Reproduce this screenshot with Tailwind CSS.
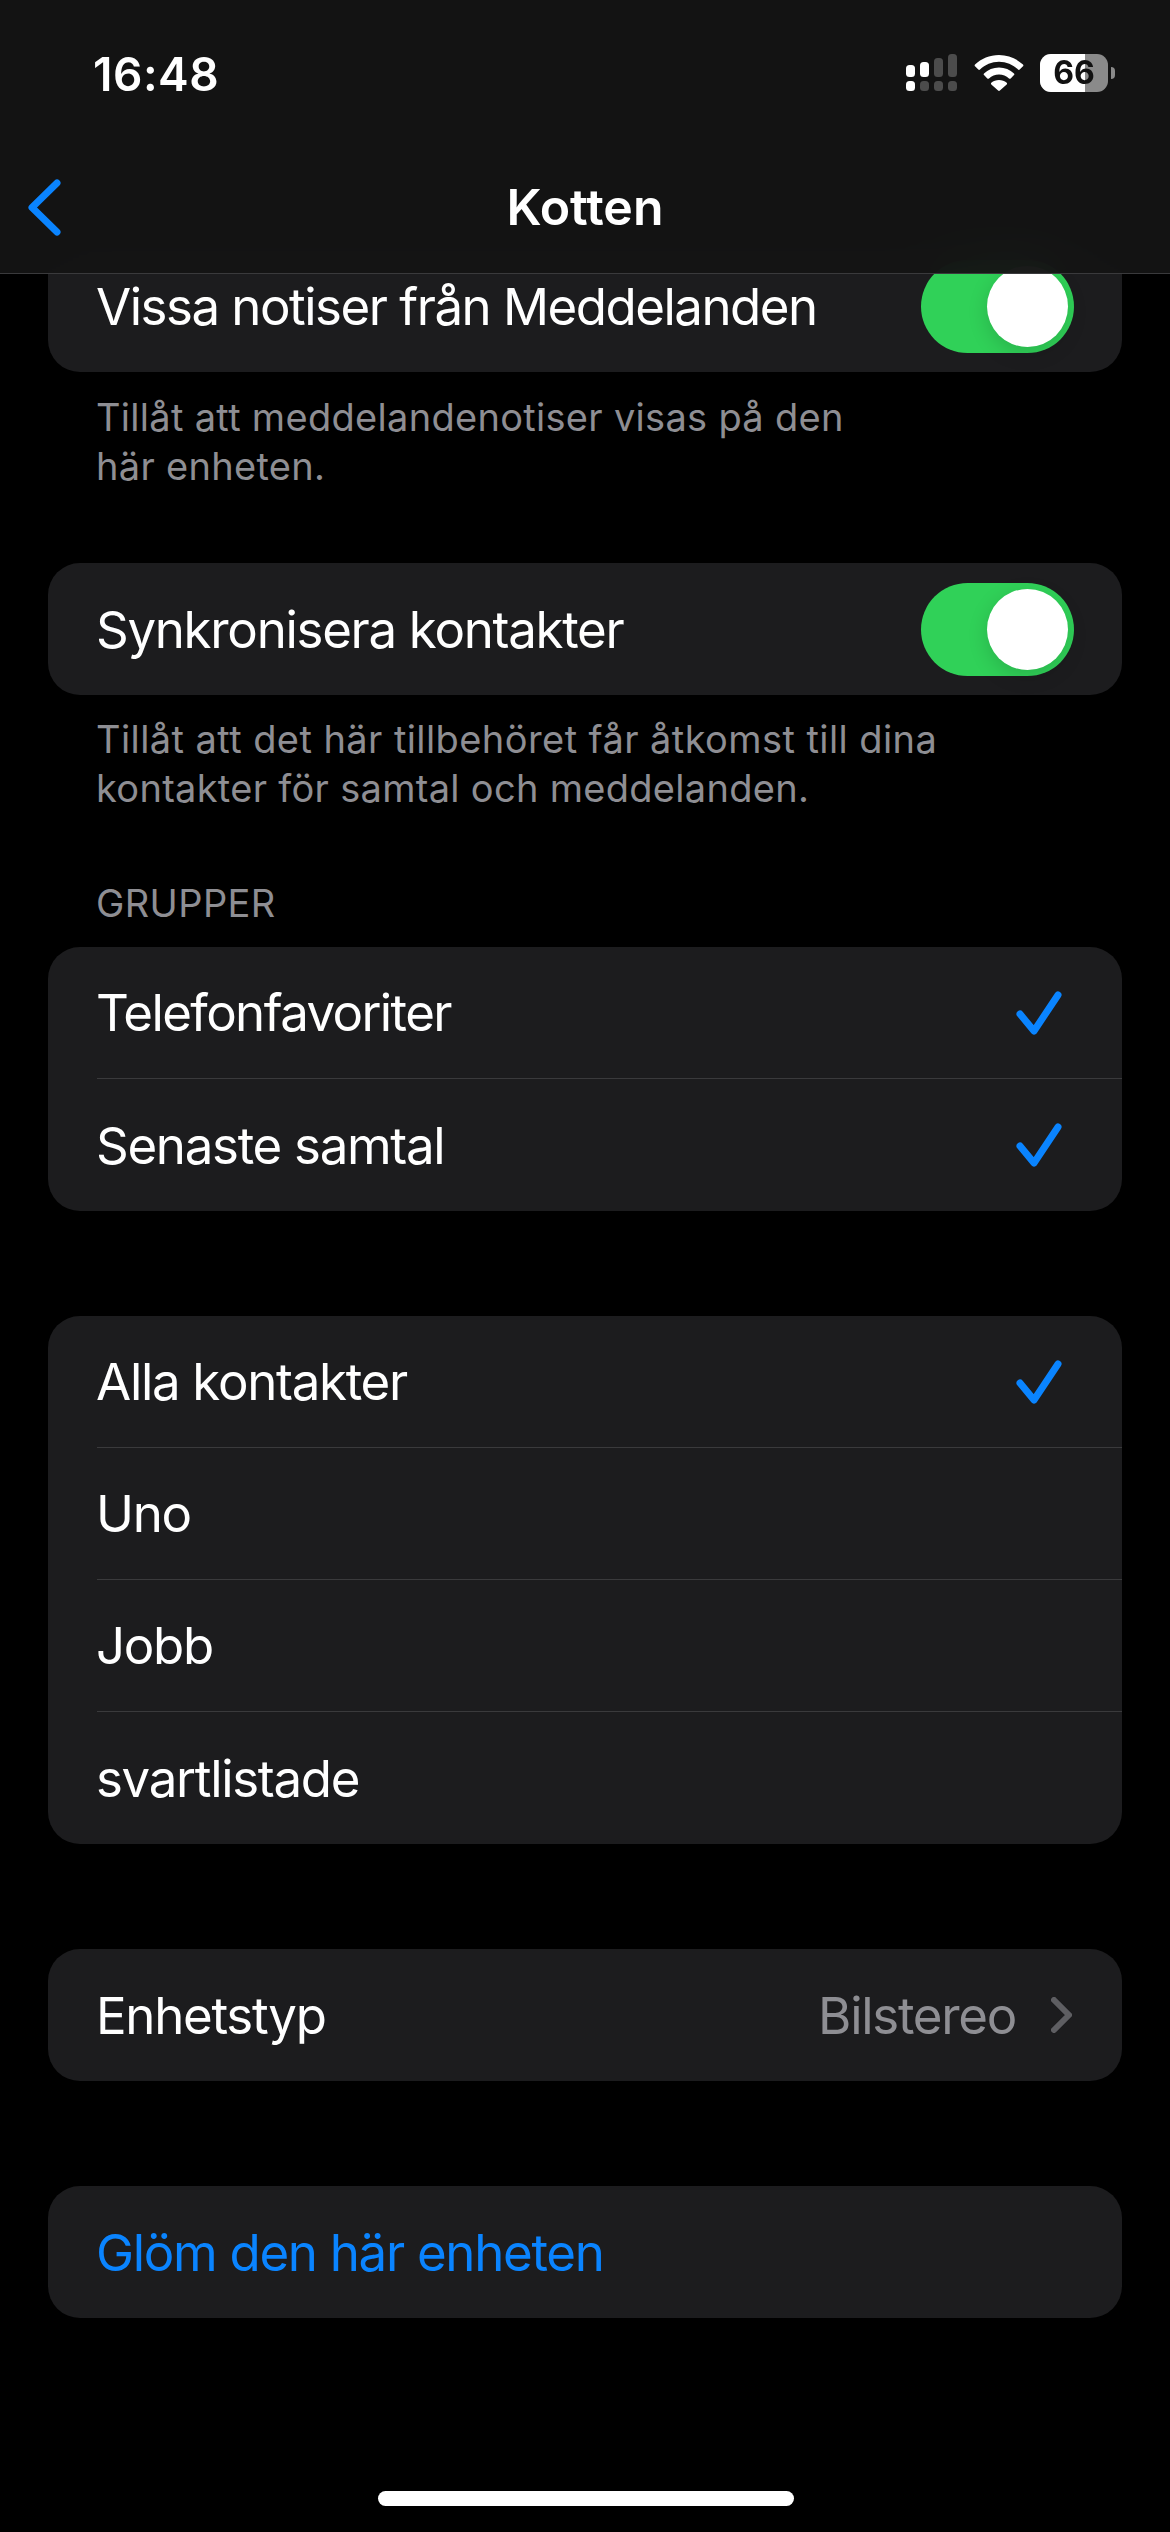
<!DOCTYPE html>
<html lang="sv">
<head>
  <meta charset="UTF-8" />
  <meta name="viewport" content="width=device-width, initial-scale=1" />
  <title>Kotten</title>
  <script src="https://cdn.jsdelivr.net/npm/@tailwindcss/browser@4"></script>
</head>
<body class="bg-black w-[1170px] h-[2532px] overflow-hidden relative font-['Inter','Liberation_Sans',sans-serif] text-white">

  <!-- Status bar + nav -->
  <header class="relative z-10 h-[274px] bg-[#141414]/95 backdrop-blur-xl border-b border-[#3a3a3c]">
    <div class="flex items-center justify-between h-[146px] pl-[93px] pr-[55px]">
      <span class="text-[46px] font-semibold leading-none tracking-[0.5px] mt-[1px]">16:48</span>
      <div class="flex items-center">
        <svg width="52" height="38" viewBox="0 0 52 38" class="mr-[16px]">
          <rect x="0" y="11" width="9" height="12" rx="3.5" fill="#fff"/>
          <rect x="14" y="8" width="9" height="15" rx="3.5" fill="#fff"/>
          <rect x="28" y="4" width="9" height="19" rx="3.5" fill="#4c4c4c"/>
          <rect x="42" y="0" width="9" height="23" rx="3.5" fill="#4c4c4c"/>
          <rect x="0" y="27" width="9" height="10" rx="3.5" fill="#fff"/>
          <rect x="14" y="27" width="9" height="10" rx="3.5" fill="#4c4c4c"/>
          <rect x="28" y="27" width="9" height="10" rx="3.5" fill="#4c4c4c"/>
          <rect x="42" y="27" width="9" height="10" rx="3.5" fill="#4c4c4c"/>
        </svg>
        <svg width="50" height="36" viewBox="0 0 50 36" class="mr-[16px]" fill="#fff">
          <path d="M25 0C15.6 0 7.3 3.6 1 9.6c-.5.5-.5 1.2 0 1.7l3.3 3.3c.5.5 1.2.5 1.7 0C11.1 9.8 17.7 6.8 25 6.8s13.9 3 19 7.8c.5.5 1.200.5 1.700 0l3.300-3.300c.5-.5.5-1.200 0-1.700C42.700 3.600 34.400 0 25 0z"/>
          <path d="M25 12.500c-5.800 0-11 2.200-15 5.900-.5.500-.5 1.200 0 1.700l3.300 3.300c.5.500 1.200.500 1.700.100 2.700-2.400 6.200-3.900 10-3.900s7.300 1.500 10 3.900c.5.400 1.200.400 1.700-.100l3.300-3.300c.5-.5.5-1.200 0-1.700-4-3.700-9.200-5.900-15-5.900z"/>
          <path d="M25 25c-2.900 0-5.600 1-7.700 2.800-.5.400-.5 1.200 0 1.700l6.800 6.100c.5.500 1.300.500 1.800 0l6.800-6.100c.5-.5.5-1.300 0-1.700C30.600 26 27.900 25 25 25z"/>
        </svg>
        <div class="flex items-center">
          <div class="relative w-[68px] h-[38px] rounded-[11px] overflow-hidden bg-[#8a8a8a] flex items-center justify-center">
            <div class="absolute left-0 top-0 bottom-0 w-[45px] bg-white"></div>
            <span class="relative text-[32px] font-bold leading-none text-[#111]">66</span>
          </div>
          <div class="w-[4px] h-[12px] ml-[3px] bg-[#8a8a8a] rounded-r-full"></div>
        </div>
      </div>
    </div>
    <div class="relative flex items-center justify-center h-[122px]">
      <svg width="40" height="64" viewBox="0 0 40 64" fill="none" class="absolute left-[24px] top-[29px]">
        <path d="M33 8 L8 32.500 L33 57" stroke="#0a84ff" stroke-width="7" stroke-linecap="round" stroke-linejoin="round"/>
      </svg>
      <h1 class="text-[50px] font-semibold leading-none">Kotten</h1>
    </div>
  </header>

  <main class="px-[48px]">
    <!-- Card is scrolled partly under the nav bar -->
    <section class="-mt-[34px] bg-[#1c1c1e] rounded-[32px] h-[132px] flex items-center justify-between pl-[48px] pr-[48px]">
      <span class="text-[51px] leading-none tracking-[-1.5px]">Vissa notiser från Meddelanden</span>
      <div class="relative w-[153px] h-[93px] rounded-full bg-[#30d158]">
        <div class="absolute right-[6px] top-[6px] w-[81px] h-[81px] rounded-full bg-white shadow-[0_6px_20px_rgba(0,0,0,0.15)]"></div>
      </div>
    </section>
    <p class="mt-[21px] pl-[48px] text-[38px] leading-[48.500px] text-[#8e8e93] tracking-[0.3px]">Tillåt att meddelandenotiser visas på den<br />här enheten.</p>

    <section class="mt-[73px] bg-[#1c1c1e] rounded-[32px] h-[132px] flex items-center justify-between pl-[48px] pr-[48px]">
      <span class="text-[51px] leading-none tracking-[-1.3px]">Synkronisera kontakter</span>
      <div class="relative w-[153px] h-[93px] rounded-full bg-[#30d158]">
        <div class="absolute right-[6px] top-[6px] w-[81px] h-[81px] rounded-full bg-white shadow-[0_6px_20px_rgba(0,0,0,0.15)]"></div>
      </div>
    </section>
    <p class="mt-[20px] pl-[48px] text-[38px] leading-[48.500px] text-[#8e8e93] tracking-[0.3px]"><span class="tracking-[0.42px]">Tillåt att det här tillbehöret får åtkomst till dina</span><br />kontakter för samtal och meddelanden.</p>

    <h2 class="mt-[67px] pl-[48px] text-[38px] leading-[48px] font-normal text-[#8e8e93] tracking-[0.4px]">GRUPPER</h2>

    <section class="mt-[20px] bg-[#1c1c1e] rounded-[32px] overflow-hidden">
      <div class="h-[131px] flex items-center justify-between pl-[48px] pr-[60px]">
        <span class="text-[51px] leading-none tracking-[-1.6px]">Telefonfavoriter</span>
        <svg width="46" height="44" viewBox="0 0 46 44" fill="none"><path d="M4 23 L18 40 L42 4" stroke="#0a84ff" stroke-width="7" stroke-linecap="round" stroke-linejoin="round"/></svg>
      </div>
      <div class="ml-[49px] border-t border-[#3a3a3c] h-[133px] flex items-center justify-between pr-[60px]">
        <span class="-ml-[1px] text-[51px] leading-none tracking-[-1.3px]">Senaste samtal</span>
        <svg width="46" height="44" viewBox="0 0 46 44" fill="none"><path d="M4 23 L18 40 L42 4" stroke="#0a84ff" stroke-width="7" stroke-linecap="round" stroke-linejoin="round"/></svg>
      </div>
    </section>

    <section class="mt-[105px] bg-[#1c1c1e] rounded-[32px] overflow-hidden">
      <div class="h-[131px] flex items-center justify-between pl-[48px] pr-[60px]">
        <span class="text-[51px] leading-none tracking-[-1.3px]">Alla kontakter</span>
        <svg width="46" height="44" viewBox="0 0 46 44" fill="none"><path d="M4 23 L18 40 L42 4" stroke="#0a84ff" stroke-width="7" stroke-linecap="round" stroke-linejoin="round"/></svg>
      </div>
      <div class="ml-[49px] border-t border-[#3a3a3c] h-[132px] flex items-center"><span class="-ml-[1px] text-[51px] leading-none tracking-[-1.3px]">Uno</span></div>
      <div class="ml-[49px] border-t border-[#3a3a3c] h-[132px] flex items-center"><span class="-ml-[1px] text-[51px] leading-none tracking-[-1.3px]">Jobb</span></div>
      <div class="ml-[49px] border-t border-[#3a3a3c] h-[133px] flex items-center"><span class="-ml-[1px] text-[51px] leading-none tracking-[-1.3px]">svartlistade</span></div>
    </section>

    <section class="mt-[105px] bg-[#1c1c1e] rounded-[32px] h-[132px] flex items-center justify-between pl-[48px] pr-[50px]">
      <span class="text-[51px] leading-none tracking-[-1.3px]">Enhetstyp</span>
      <div class="flex items-center">
        <span class="text-[51px] leading-none tracking-[-1.3px] text-[#8e8e93]">Bilstereo</span>
        <svg width="21" height="36" viewBox="0 0 21 36" fill="none" class="ml-[35px]"><path d="M3 3 L18 18 L3 33" stroke="#5e5e62" stroke-width="6" stroke-linecap="round" stroke-linejoin="round"/></svg>
      </div>
    </section>

    <section class="mt-[105px] bg-[#1c1c1e] rounded-[32px] h-[132px] flex items-center pl-[48px]">
      <span class="text-[51px] leading-none tracking-[-1.3px] text-[#0a84ff]">Glöm den här enheten</span>
    </section>
  </main>

  <!-- Home indicator -->
  <div class="absolute left-[378px] top-[2491px] w-[416px] h-[15px] rounded-full bg-white"></div>
</body>
</html>
